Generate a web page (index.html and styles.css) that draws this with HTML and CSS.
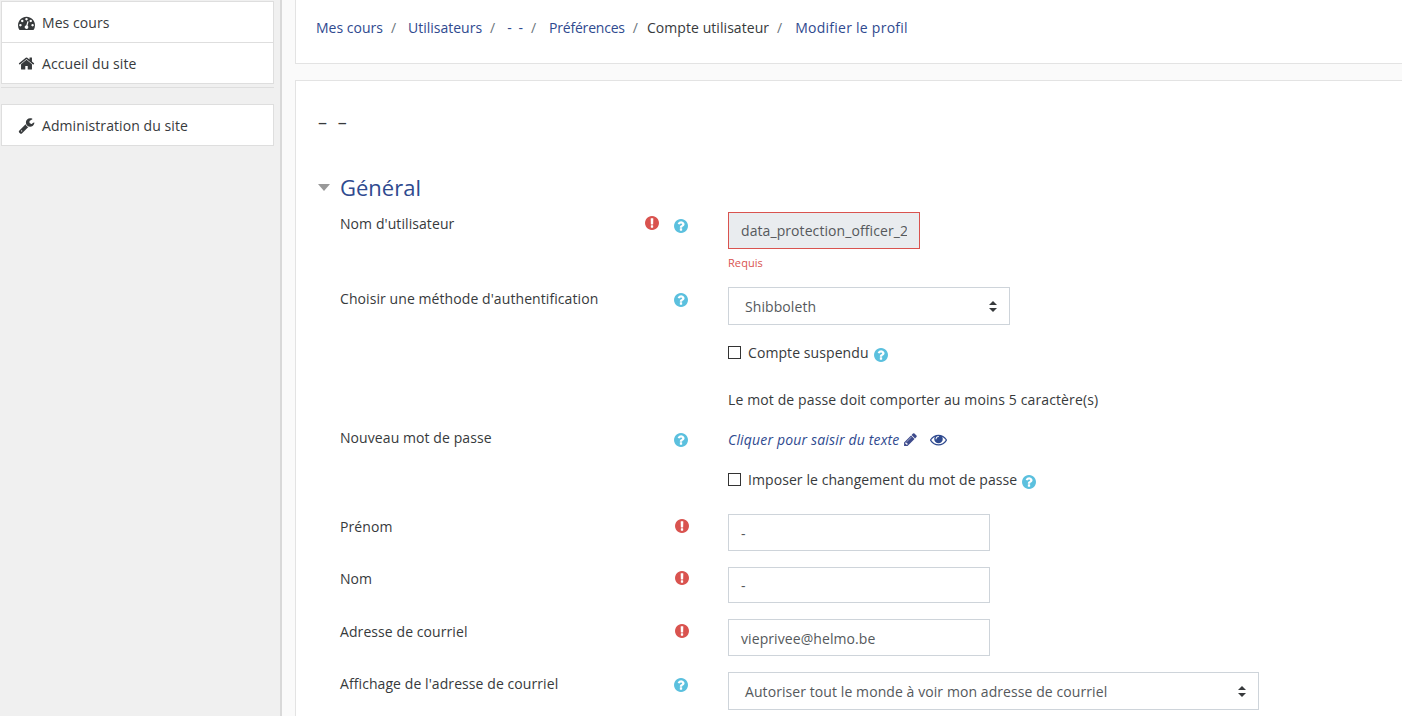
FILE: index.html
```html
<!DOCTYPE html>
<html lang="fr">
<head>
<meta charset="utf-8">
<title>Modifier le profil</title>
<link rel="stylesheet" href="styles.css">
</head>
<body>
<svg class="defs" width="0" height="0" aria-hidden="true">
<symbol id="i-q" viewBox="128 128 1536 1536"><path d="M1024 1376v-192q0-14-9-23t-23-9h-192q-14 0-23 9t-9 23v192q0 14 9 23t23 9h192q14 0 23-9t9-23zm256-672q0-88-55.500-163t-138.500-116-170-41q-243 0-371 213-15 24 8 42l132 100q7 6 19 6 16 0 25-12 53-68 86-92 34-24 86-24 48 0 85.500 26t37.500 59q0 38-20 61t-68 45q-63 28-115.500 86.500t-52.500 125.500v36q0 14 9 23t23 9h192q14 0 23-9t9-23q0-19 21.500-49.500t54.500-49.500q32-18 49-28.500t46-35 44.500-48 28-60.500 12.500-81zm384 192q0 209-103 385.500t-279.500 279.500-385.500 103-385.500-103-279.500-279.500-103-385.500 103-385.500 279.500-279.500 385.500-103 385.500 103 279.500 279.500 103 385.500z"/></symbol>
<symbol id="i-e" viewBox="128 128 1536 1536"><path d="M896 128q209 0 385.500 103t279.500 279.500 103 385.500-103 385.500-279.500 279.500-385.500 103-385.500-103-279.500-279.500-103-385.500 103-385.500 279.500-279.500 385.500-103zm128 1247v-190q0-14-9-23.500t-22-9.500h-192q-13 0-23 10t-10 23v190q0 13 10 23t23 10h192q13 0 22-9.500t9-23.500zm-2-344l18-621q0-12-10-18-10-8-24-8h-220q-14 0-24 8-10 6-10 18l17 621q0 10 10 17.500t24 7.500h185q14 0 23.500-7.500t10.500-17.500z"/></symbol>
<symbol id="i-home" viewBox="0 0 1792 1792"><path d="M1472 992v480q0 26-19 45t-45 19h-384v-384h-256v384h-384q-26 0-45-19t-19-45v-480q0-1 .5-3t.5-3l575-474 575 474q1 2 1 6zm223-69l-62 74q-8 9-21 11h-3q-13 0-21-7l-692-577-692 577q-12 8-24 7-13-2-21-11l-62-74q-8-10-7-23.500t11-21.500l719-599q32-26 76-26t76 26l244 204v-195q0-14 9-23t23-9h192q14 0 23 9t9 23v408l219 182q10 8 11 21.500t-7 23.500z"/></symbol>
<symbol id="i-wrench" viewBox="0 0 1792 1792"><path d="M448 1472q0-26-19-45t-45-19-45 19-19 45 19 45 45 19 45-19 19-45zm644-420l-682 682q-37 37-90 37-52 0-91-37l-106-108q-38-36-38-90 0-53 38-91l681-681q39 98 114.500 173.500t173.500 114.500zm634-435q0 39-23 106-47 134-164.500 217.500t-258.500 83.500q-185 0-316.500-131.500t-131.500-316.500 131.500-316.500 316.500-131.500q58 0 121.500 16.500t107.500 46.500q16 11 16 28t-16 28l-293 169v224l193 107q5-3 79-48.500t135.500-81 70.500-35.500q15 0 23.500 10t8.500 25z"/></symbol>
<symbol id="i-gauge" viewBox="0 0 1792 1792"><path d="M384 1184q0-53-37.500-90.500t-90.500-37.500-90.500 37.500-37.500 90.500 37.500 90.500 90.500 37.500 90.500-37.500 37.500-90.500zm192-448q0-53-37.500-90.500t-90.500-37.500-90.500 37.500-37.500 90.500 37.500 90.500 90.500 37.500 90.500-37.500 37.500-90.500zm428 481l101-382q6-26-7.500-48.500t-38.500-29.500-48 6.500-30 39.500l-101 382q-60 5-107 43.500t-63 98.500q-20 77 20 146t117 89 146-20 89-117q16-60-6-117t-72-91zm660-33q0-53-37.500-90.500t-90.500-37.500-90.500 37.500-37.500 90.500 37.500 90.500 90.500 37.500 90.500-37.500 37.500-90.500zm-640-640q0-53-37.500-90.500t-90.500-37.500-90.500 37.500-37.500 90.500 37.500 90.500 90.500 37.500 90.500-37.500 37.500-90.500zm448 192q0-53-37.500-90.500t-90.500-37.500-90.500 37.500-37.500 90.500 37.500 90.500 90.500 37.500 90.500-37.500 37.500-90.500zm320 448q0 261-141 483-19 29-54 29h-1402q-35 0-54-29-141-221-141-483 0-182 71-348t191-286 286-191 348-71 348 71 286 191 191 286 71 348z"/></symbol>
<symbol id="i-pencil" viewBox="0 0 1792 1792"><path d="M491 1536l91-91-235-235-91 91v107h128v128h107zm523-928q0-22-22-22-10 0-17 7l-542 542q-7 7-7 17 0 22 22 22 10 0 17-7l542-542q7-7 7-17zm-54-192l416 416-832 832h-416v-416zm683 96q0 53-37 90l-166 166-416-416 166-165q36-38 90-38 53 0 91 38l235 234q37 39 37 91z"/></symbol>
<symbol id="i-eye" viewBox="0 0 1792 1792"><path d="M1664 960q-152-236-381-353 61 104 61 225 0 185-131.500 316.500t-316.500 131.500-316.500-131.500-131.500-316.500q0-121 61-225-229 117-381 353 133 205 333.500 326.500t434.500 121.500 434.500-121.500 333.500-326.500zm-720-384q0-20-14-34t-34-14q-125 0-214.500 89.500t-89.500 214.500q0 20 14 34t34 14 34-14 14-34q0-86 61-147t147-61q20 0 34-14t14-34zm848 384q0 34-20 69-140 230-376.500 368.500t-499.500 138.500-499.500-139-376.500-368q-20-35-20-69t20-69q140-229 376.500-368t499.500-139 499.500 139 376.500 368q20 35 20 69z"/></symbol>
</svg>
<div class="page">
  <aside class="sidebar">
    <ul class="nav nav-top">
      <li class="nav-item"><svg class="nav-icon"><use href="#i-gauge"/></svg>Mes cours</li>
      <li class="nav-item"><svg class="nav-icon"><use href="#i-home"/></svg>Accueil du site</li>
    </ul>
    <div class="nav-rule"></div>
    <ul class="nav">
      <li class="nav-item"><svg class="nav-icon"><use href="#i-wrench"/></svg>Administration du site</li>
    </ul>
  </aside>
  <main class="main">
    <nav class="crumbs">
      <a class="crumb">Mes cours</a><span class="sep">/</span>
      <a class="crumb">Utilisateurs</a><span class="sep">/</span>
      <a class="crumb crumb-dash">- -</a><span class="sep sep-wide">/</span>
      <a class="crumb crumb-narrow">Préférences</a><span class="sep sep-tight">/</span>
      <span class="crumb crumb-plain">Compte utilisateur</span><span class="sep sep-next">/</span>
      <a class="crumb crumb-wide">Modifier le profil</a>
    </nav>
    <section class="card">
      <h2 class="user-name">– –</h2>
      <h3 class="section-title"><span class="caret"></span>Général</h3>

      <div class="row row-user">
        <div class="label">Nom d'utilisateur</div>
        <div class="icons"><svg class="ic ic-err"><use href="#i-e"/></svg><svg class="ic ic-help"><use href="#i-q"/></svg></div>
        <div class="field">
          <div class="input input-error"><span class="clip">data_protection_officer_2</span></div>
          <div class="error-text">Requis</div>
        </div>
      </div>

      <div class="row row-auth">
        <div class="label">Choisir une méthode d'authentification</div>
        <div class="icons"><svg class="ic ic-help"><use href="#i-q"/></svg></div>
        <div class="field"><div class="select select-auth">Shibboleth<span class="updown"></span></div></div>
      </div>

      <div class="row row-check1">
        <div class="field field-only"><label class="check"><span class="box"></span>Compte suspendu<svg class="ic ic-help ic-inline"><use href="#i-q"/></svg></label></div>
      </div>

      <div class="row row-hint">
        <div class="field field-only">Le mot de passe doit comporter au moins 5 caractère(s)</div>
      </div>

      <div class="row row-pass">
        <div class="label">Nouveau mot de passe</div>
        <div class="icons"><svg class="ic ic-help"><use href="#i-q"/></svg></div>
        <div class="field pass-field"><em>Cliquer pour saisir du texte</em><svg class="pencil"><use href="#i-pencil"/></svg><svg class="eye"><use href="#i-eye"/></svg></div>
      </div>

      <div class="row row-check2">
        <div class="field field-only"><label class="check"><span class="box"></span>Imposer le changement du mot de passe<svg class="ic ic-help ic-inline"><use href="#i-q"/></svg></label></div>
      </div>

      <div class="row row-first">
        <div class="label">Prénom</div>
        <div class="icons"><svg class="ic ic-err"><use href="#i-e"/></svg></div>
        <div class="field"><div class="input input-wide">-</div></div>
      </div>

      <div class="row row-last">
        <div class="label">Nom</div>
        <div class="icons"><svg class="ic ic-err"><use href="#i-e"/></svg></div>
        <div class="field"><div class="input input-wide input-short">-</div></div>
      </div>

      <div class="row row-mail">
        <div class="label">Adresse de courriel</div>
        <div class="icons"><svg class="ic ic-err"><use href="#i-e"/></svg></div>
        <div class="field"><div class="input input-wide">vieprivee@helmo.be</div></div>
      </div>

      <div class="row row-show">
        <div class="label">Affichage de l'adresse de courriel</div>
        <div class="icons"><svg class="ic ic-help"><use href="#i-q"/></svg></div>
        <div class="field"><div class="select select-mail">Autoriser tout le monde à voir mon adresse de courriel<span class="updown"></span></div></div>
      </div>
    </section>
  </main>
</div>
</body>
</html>
```
FILE: styles.css
```css
* { box-sizing: border-box; }
html, body { margin: 0; height: 716px; overflow: hidden; }
body {
  background: #fafafa;
  color: #373a3c;
  font-family: "Open Sans", "Noto Sans", sans-serif;
  font-size: 14px;
  line-height: 21px;
  letter-spacing: .08px;
}
.defs { position: absolute; }
.page { display: flex; height: 716px; overflow: hidden; }

.sidebar {
  flex: 0 0 282px;
  height: 716px;
  padding: 1px 6px 0 1px;
  background: #f0f0f0;
  border-right: 2px solid #d9d9d9;
}
.nav { list-style: none; margin: 0; padding: 0; background: #fff; border: 1px solid #dedede; border-bottom: 0; }
.nav-item {
  display: flex;
  align-items: center;
  height: 41px;
  padding-left: 16px;
  border-bottom: 1px solid #dedede;
}
.nav-icon { width: 17px; height: 17px; margin-right: 7px; fill: #373a3c; flex: none; }
.nav-rule { height: 1px; margin: 3px 0 16px; background: #dedede; }

.main { flex: 1; min-width: 0; padding-left: 13px; }
.crumbs {
  display: flex;
  align-items: center;
  height: 64px;
  padding: 0 0 9px 20px;
  background: #fff;
  border: 1px solid #e3e3e3;
  border-top: 0;
  border-right: 0;
  letter-spacing: 0;
}
.crumb { color: #2f4a8f; }
.crumb-plain { color: #373a3c; letter-spacing: .06px; }
.crumb-dash { word-spacing: 3px; }
.crumb-narrow { letter-spacing: -.2px; }
.crumb-wide { letter-spacing: .25px; }
.sep { margin: 0 12px 0 8px; color: #6c757d; }
.sep-wide { margin-right: 13px; }
.sep-tight { margin-right: 9px; }
.sep-next { margin-right: 13px; }

.card {
  margin-top: 16px;
  height: 660px;
  padding: 0 0 0 22px;
  background: #fff;
  border: 1px solid #e3e3e3;
  border-right: 0;
}
.user-name { margin: 28px 0 0; height: 27px; font-size: 18px; line-height: 27px; font-weight: 400; word-spacing: 6px; }
.section-title {
  display: flex;
  align-items: center;
  margin: 35px 0 0;
  height: 32px;
  color: #2f4a8f;
  font-size: 22px;
  font-weight: 400;
  letter-spacing: 0;
}
.caret {
  width: 0; height: 0;
  margin-right: 10px;
  border-left: 6px solid transparent;
  border-right: 6px solid transparent;
  border-top: 7px solid #999;
}
.row { display: grid; grid-template-columns: 300px 49px 1fr; padding-left: 22px; }
.label { padding-top: 1px; }
.icons { display: flex; justify-content: flex-end; gap: 15px; padding-top: 4px; }
.field { padding-left: 39px; min-width: 0; }
.field-only { grid-column: 3; }
.ic { width: 14px; height: 14px; flex: none; }
.ic-err { fill: #d9534f; }
.ic-help { fill: #5bc0de; margin: 2px 1px 0 0; }
.row-user .ic-help { margin-top: 3px; }
.ic-inline { margin: 0 0 0 5px; position: relative; top: 2px; }

.input {
  height: 37px;
  padding: 0 12px;
  line-height: 37px;
  color: #55595c;
  background: #fff;
  border: 1px solid #ced4da;
}
.input-wide { width: 262px; }
.input-short { height: 36px; line-height: 36px; }
.input-error { width: 192px; background: #e9ecef; border-color: #d9534f; line-height: 35px; }
.clip { display: block; overflow: hidden; white-space: nowrap; }
.error-text { margin-top: 4px; font-size: 11px; line-height: 20px; color: #d9534f; }
.select {
  position: relative;
  height: 38px;
  padding: 0 16px;
  line-height: 37px;
  color: #55595c;
  background: #fff;
  border: 1px solid #ced4da;
}
.select-auth { width: 282px; }
.select-mail { width: 531px; }
.updown { position: absolute; right: 12px; top: 13px; width: 8px; height: 11px; }
.updown::before, .updown::after { content: ""; position: absolute; left: 0; border-left: 4px solid transparent; border-right: 4px solid transparent; }
.updown::before { top: 0; border-bottom: 4px solid #373a3c; }
.updown::after { bottom: 0; border-top: 4px solid #373a3c; }

.check { display: flex; align-items: center; }
.box { width: 13px; height: 13px; margin-right: 7px; border: 1px solid #333; background: #fff; flex: none; }

.pass-field { display: flex; align-items: center; height: 21px; margin-top: 2px; color: #2f4a8f; }
.pass-field em { letter-spacing: .17px; }
.pencil { width: 15px; height: 15px; margin-left: 4px; fill: #3e4b8c; }
.eye { width: 17px; height: 17px; margin-left: 12px; fill: #2f4a8f; }

.row-user { margin-top: 9px; height: 75px; }
.row-auth { height: 55px; }
.row-check1 { height: 46px; }
.row-hint { height: 39px; padding-top: 1px; letter-spacing: .12px; }
.row-pass { height: 42px; }
.row-check2 { height: 45px; }
.row-first { height: 53px; }
.row-last { height: 52px; }
.row-mail { height: 53px; }
.row-pass .label { padding-top: 0; }
.row-first .label, .row-mail .label { padding-top: 2px; }
.row-first .icons, .row-mail .icons { padding-top: 5px; }
```
